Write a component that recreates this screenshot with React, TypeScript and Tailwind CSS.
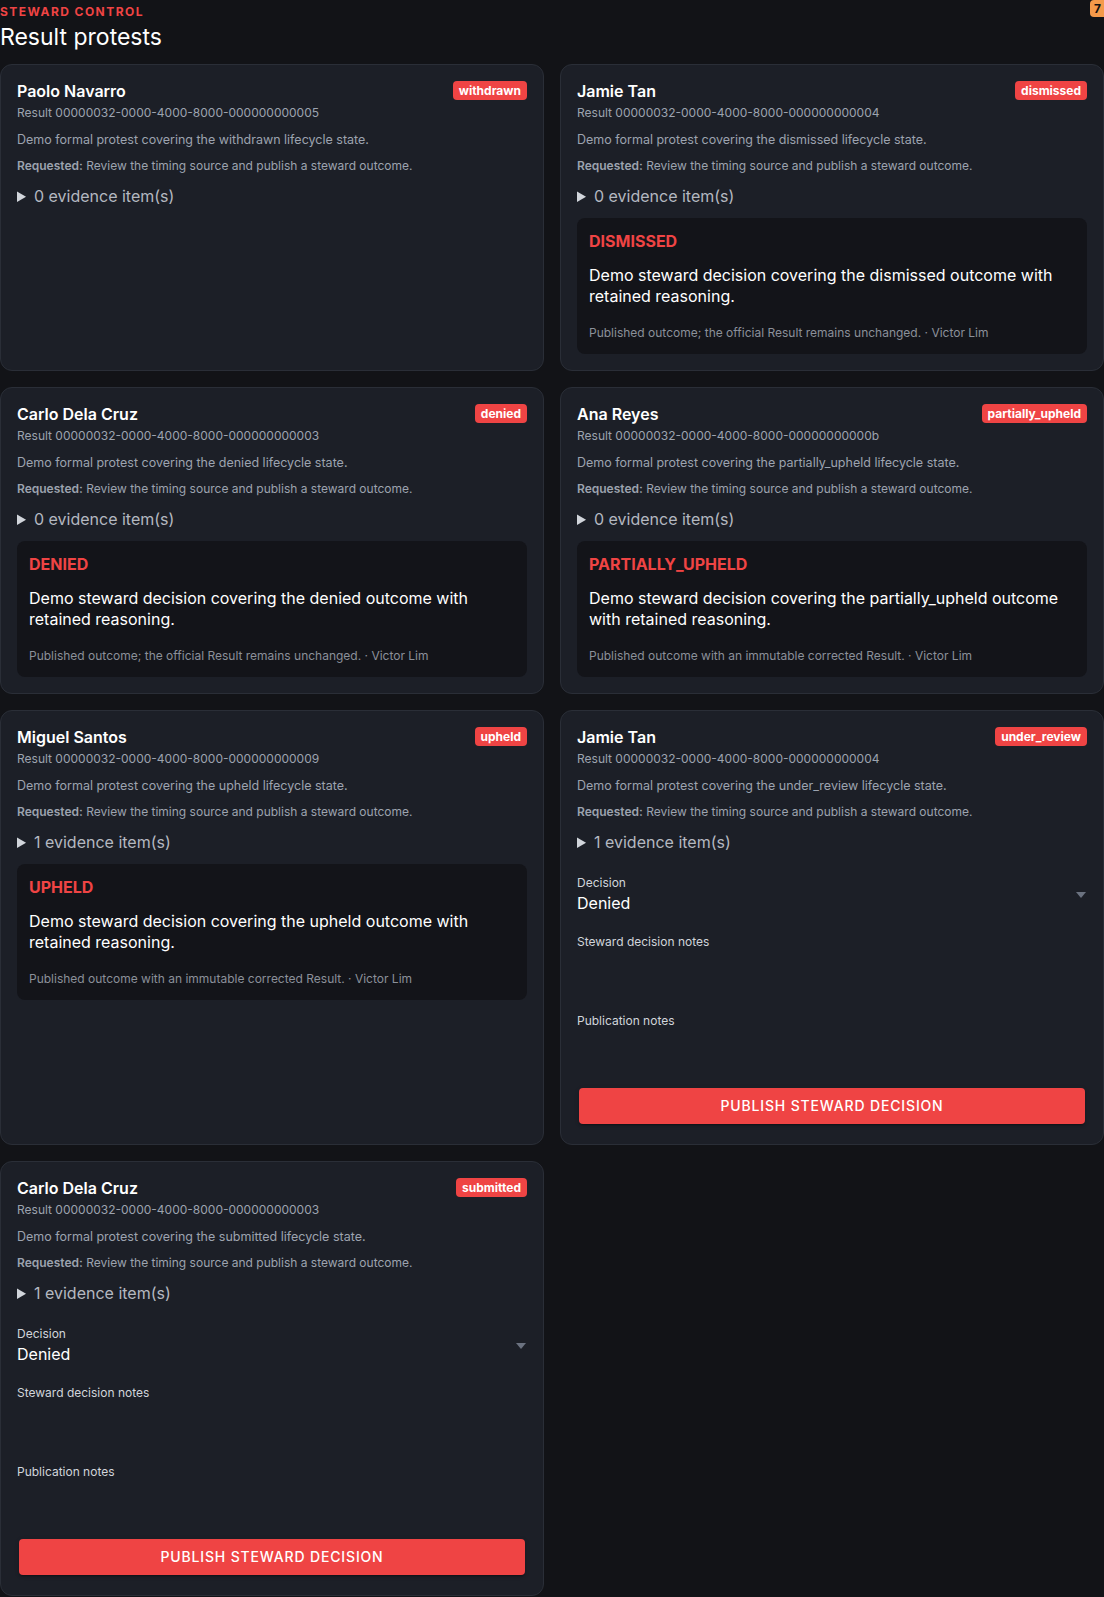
import React from 'react';

type Protest = {
  id: string;
  driver: string;
  status: string;
  resultId: string;
  evidence: number;
  decision?: { outcome: string; note: string };
};

const UNCHANGED = 'Published outcome; the official Result remains unchanged.';
const CORRECTED = 'Published outcome with an immutable corrected Result.';

const PROTESTS: Protest[] = [
  { id: 'p1', driver: 'Paolo Navarro', status: 'withdrawn', resultId: '00000032-0000-4000-8000-000000000005', evidence: 0 },
  { id: 'p2', driver: 'Jamie Tan', status: 'dismissed', resultId: '00000032-0000-4000-8000-000000000004', evidence: 0, decision: { outcome: 'dismissed', note: UNCHANGED } },
  { id: 'p3', driver: 'Carlo Dela Cruz', status: 'denied', resultId: '00000032-0000-4000-8000-000000000003', evidence: 0, decision: { outcome: 'denied', note: UNCHANGED } },
  { id: 'p4', driver: 'Ana Reyes', status: 'partially_upheld', resultId: '00000032-0000-4000-8000-00000000000b', evidence: 0, decision: { outcome: 'partially_upheld', note: CORRECTED } },
  { id: 'p5', driver: 'Miguel Santos', status: 'upheld', resultId: '00000032-0000-4000-8000-000000000009', evidence: 1, decision: { outcome: 'upheld', note: CORRECTED } },
  { id: 'p6', driver: 'Jamie Tan', status: 'under_review', resultId: '00000032-0000-4000-8000-000000000004', evidence: 1 },
  { id: 'p7', driver: 'Carlo Dela Cruz', status: 'submitted', resultId: '00000032-0000-4000-8000-000000000003', evidence: 1 },
];

const isOpen = (status: string) => status === 'under_review' || status === 'submitted';

// Decision form for protests still waiting on stewards
const DecisionForm = () => (
  <div className="mt-[22px] flex flex-col gap-[19px]">
    <div className="relative">
      <label className="block text-xs leading-4 text-[#d1d5db]">Decision</label>
      <div className="flex items-center justify-between">
        <span className="text-base leading-6 text-white">Denied</span>
        <svg width="10" height="6" viewBox="0 0 10 6" className="-mt-4 mr-px">
          <path d="M0 0h10L5 6z" fill="#6b7280" />
        </svg>
      </div>
    </div>
    <div>
      <label className="block text-xs leading-4 text-[#d1d5db]">Steward decision notes</label>
      <textarea className="block h-[44px] w-full resize-none bg-transparent text-sm text-white outline-none" />
    </div>
    <div>
      <label className="block text-xs leading-4 text-[#d1d5db]">Publication notes</label>
      <textarea className="block h-[44px] w-full resize-none bg-transparent text-sm text-white outline-none" />
    </div>
    <button className="mx-0.5 -mt-[4px] mb-[4px] h-9 rounded bg-[#ef4444] text-sm font-medium uppercase tracking-[0.06em] text-white shadow-[0_3px_1px_-2px_rgba(0,0,0,0.2),0_2px_2px_0_rgba(0,0,0,0.14),0_1px_5px_0_rgba(0,0,0,0.12)]">
      Publish steward decision
    </button>
  </div>
);

const ProtestCard = ({ p }: { p: Protest }) => (
  <div className="rounded-xl border border-[#2a2e37] bg-[#1c1f27] p-4">
    <div className="flex items-start justify-between">
      <h3 className="text-base font-semibold leading-5 text-white">{p.driver}</h3>
      <span className="rounded bg-[#ef4444] px-1.5 text-xs font-bold leading-[19px] text-white">{p.status}</span>
    </div>
    <p className="mt-1 text-xs leading-4 text-[#9ca3af]">Result {p.resultId}</p>
    <p className="mt-[11px] text-[12.5px] leading-4 text-[#9ca3af]">
      Demo formal protest covering the {p.status} lifecycle state.
    </p>
    <p className="mt-[10px] text-xs leading-4 text-[#9ca3af]">
      <span className="font-semibold">Requested:</span> Review the timing source and publish a steward outcome.
    </p>
    <details className="mt-[11px]">
      <summary className="cursor-pointer text-base leading-[22px] text-[#b4b8c0] marker:text-[#d1d5db]">
        {p.evidence} evidence item(s)
      </summary>
    </details>
    {p.decision && (
      <div className="mt-[11px] rounded-lg bg-[#131419] px-3 pb-3 pt-[11px]">
        <div className="text-base font-bold uppercase leading-6 text-[#ef4444]">{p.decision.outcome}</div>
        <p className="mt-[12px] text-base leading-[21px] text-white">
          Demo steward decision covering the {p.decision.outcome} outcome with retained reasoning.
        </p>
        <p className="mt-[18px] pb-px text-xs leading-4 text-[#8b9099]">{p.decision.note} · Victor Lim</p>
      </div>
    )}
    {isOpen(p.status) && <DecisionForm />}
  </div>
);

export default function App() {
  return (
    <div
      className="relative min-h-screen bg-[#121317] pb-1 text-white"
      style={{ fontFamily: 'Inter, "Noto Sans", "Liberation Sans", sans-serif' }}
    >
      <span className="absolute right-0 top-0 rounded-l-[4px] bg-[#f59a4a] pl-1 pr-[3px] text-xs font-bold leading-[17px] text-[#111]">
        7
      </span>
      <header className="pt-[4px]">
        <div className="text-xs font-bold uppercase leading-4 tracking-[0.12em] text-[#ef4444]">Steward control</div>
        <h1 className="mt-px text-[23px] leading-8 text-white">Result protests</h1>
      </header>
      <div className="mt-[11px] grid grid-cols-2 gap-4">
        {PROTESTS.map((p) => (
          <ProtestCard key={p.id} p={p} />
        ))}
      </div>
    </div>
  );
}
